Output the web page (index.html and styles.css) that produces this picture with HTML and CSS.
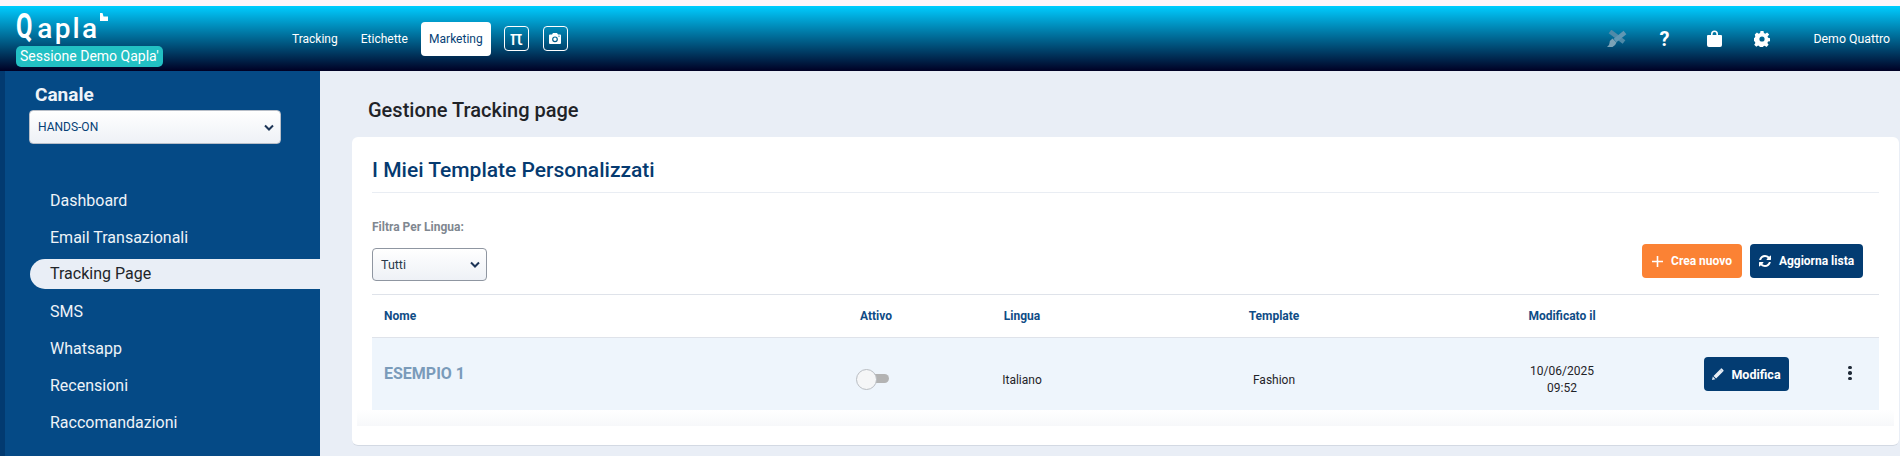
FILE: index.html
```html
<!DOCTYPE html>
<html lang="it">
<head>
<meta charset="utf-8">
<title>Gestione Tracking page</title>
<link rel="stylesheet" href="styles.css">
</head>
<body>
<div class="strip"></div>
<header class="topbar">
  <div class="brand">
    <div class="logo"><span class="logo-text"><span class="logo-q">Q</span>apla</span><svg class="logo-mark" viewBox="0 0 8 8"><path d="M0 0h2.5l1 3.5H8V8H0z" fill="#fff"/></svg></div>
    <div class="badge">Sessione Demo Qapla'</div>
  </div>
  <nav class="nav">
    <a class="nav-link">Tracking</a>
    <a class="nav-link">Etichette</a>
    <a class="nav-link nav-active">Marketing</a>
    <a class="nav-icon pi">π</a>
    <a class="nav-icon"><svg width="12" height="11" viewBox="0 0 12 11"><path d="M0 2.5Q0 1.6 1 1.6h2L4 0h4l1 1.6h2q1 0 1 .9V10q0 1-1 1H1q-1 0-1-1zM6 3.4a2.9 2.9 0 1 0 0 5.8 2.9 2.9 0 0 0 0-5.8zm0 1.2a1.7 1.7 0 1 1 0 3.4 1.7 1.7 0 0 1 0-3.4zM10 2.6a.6.6 0 1 0 0 1.2.6.6 0 0 0 0-1.2z" fill="#fff" fill-rule="evenodd"/></svg></a>
  </nav>
  <div class="tools">
    <svg class="tool-brush" width="20" height="17" viewBox="0 0 20 17"><path d="M3 1.500 17 12" stroke="#4f8aa8" stroke-width="4.500" fill="none"/><path d="M18 2.500 8 10.500" stroke="#5f97b3" stroke-width="4.500" fill="none"/><path d="M5.500 8.500l4 4q-1 3-4 4.500H0q2.500-1.500 2.500-4t3-4.500z" fill="#7ba2b6"/></svg>
    <span class="tool-q">?</span>
    <svg class="tool-bag" width="15" height="17" viewBox="0 0 15 17"><path d="M4 5V4a3.5 3.5 0 0 1 7 0v1h3q1 0 1 1v9q0 2-2 2H2q-2 0-2-2V6q0-1 1-1zm1.600 0h3.800V4a1.900 1.900 0 0 0-3.800 0z" fill="#fff" fill-rule="evenodd"/></svg>
    <svg class="tool-gear" width="16" height="16" viewBox="0 0 16 16"><path d="M6.500 0h3l.4 2.100 1.400.6 1.800-1.200 2.100 2.100L13.500 5.400l.6 1.400 1.900.4v3l-2 .4-.6 1.400 1.200 1.800-2.100 2.100-1.800-1.200-1.400.6-.4 1.900h-3l-.4-2-1.400-.6-1.800 1.200-2.100-2.100 1.200-1.800-.6-1.400-2-.4V7.200l1.900-.4.600-1.400L.8 3.600l2.100-2.100 1.800 1.200 1.400-.6zM8 5.400a2.600 2.600 0 1 0 0 5.200 2.600 2.600 0 0 0 0-5.200z" fill="#fff" fill-rule="evenodd"/></svg>
    <span class="user">Demo Quattro</span>
  </div>
</header>
<div class="layout">
  <aside class="sidebar">
    <div class="channel-title">Canale</div>
    <div class="select channel-select"><span>HANDS-ON</span><svg class="chev" width="10" height="7" viewBox="0 0 10 7"><path d="M1 1.500l4 4 4-4" fill="none" stroke="#1d3557" stroke-width="2"/></svg></div>
    <ul class="menu">
      <li class="menu-item">Dashboard</li>
      <li class="menu-item">Email Transazionali</li>
      <li class="menu-item menu-active">Tracking Page</li>
      <li class="menu-item">SMS</li>
      <li class="menu-item">Whatsapp</li>
      <li class="menu-item">Recensioni</li>
      <li class="menu-item">Raccomandazioni</li>
    </ul>
  </aside>
  <main class="main">
    <h1 class="page-title">Gestione Tracking page</h1>
    <section class="card">
      <h2 class="card-title">I Miei Template Personalizzati</h2>
      <div class="toolbar">
        <div class="filter">
          <div class="filter-label">Filtra Per Lingua:</div>
          <div class="select lang-select"><span>Tutti</span><svg class="chev" width="10" height="7" viewBox="0 0 10 7"><path d="M1 1.500l4 4 4-4" fill="none" stroke="#1d3557" stroke-width="2"/></svg></div>
        </div>
        <div class="actions">
          <button class="btn btn-orange"><svg width="11" height="11" viewBox="0 0 11 11"><path d="M5.500 0v11M0 5.500h11" stroke="#fff" stroke-width="1.600"/></svg>Crea nuovo</button>
          <button class="btn btn-navy btn-refresh"><svg width="12" height="12" viewBox="0 0 1536 1536"><path d="M1511 928q0 5-1 7-64 268-268 434.500T764 1536q-146 0-282.500-55T238 1324l-129 129q-19 19-45 19t-45-19-19-45V960q0-26 19-45t45-19h448q26 0 45 19t19 45-19 45l-137 137q71 66 161 102t187 36q134 0 250-65t186-179q11-17 53-117 8-23 30-23h192q13 0 22.500 9.500t9.500 22.500zM1536 128v448q0 26-19 45t-45 19h-448q-26 0-45-19t-19-45 19-45l138-138q-148-137-349-137-134 0-250 65T332 500q-11 17-53 117-8 23-30 23H50q-13 0-22.500-9.500T18 608v-7q65-268 270-434.500T768 0q146 0 284 55.500T1297 212l130-129q19-19 45-19t45 19 19 45z" fill="#fff"/></svg>Aggiorna lista</button>
        </div>
      </div>
      <div class="table">
        <div class="row head">
          <div class="cell name">Nome</div>
          <div class="cell">Attivo</div>
          <div class="cell">Lingua</div>
          <div class="cell">Template</div>
          <div class="cell">Modificato il</div>
          <div class="cell"></div>
          <div class="cell"></div>
        </div>
        <div class="row body">
          <div class="cell name esempio">ESEMPIO 1</div>
          <div class="cell"><span class="switch"></span></div>
          <div class="cell low">Italiano</div>
          <div class="cell low">Fashion</div>
          <div class="cell date">10/06/2025<br>09:52</div>
          <div class="cell edit"><button class="btn btn-navy btn-edit"><svg width="12" height="12" viewBox="0 0 12 12"><path d="M0 12l.8-3.400L3.400 11.200zM1.500 7.900L8 1.400l2.600 2.600L4.100 10.500zM8.700.7q.7-.7 1.400 0l1.200 1.200q.7.7 0 1.400l-.6.6-2.600-2.600z" fill="#e8eef5"/></svg>Modifica</button></div>
          <div class="cell dots"><i></i><i></i><i></i></div>
        </div>
      </div>
      <div class="card-fade"></div>
    </section>
  </main>
</div>
</body>
</html>
```
FILE: styles.css
```css
* { box-sizing: border-box; }
html, body { margin: 0; padding: 0; height: 456px; overflow: hidden; }
body { font-family: Roboto, "Liberation Sans", sans-serif; background: #e9eef6; color: #212529; }

.strip { height: 6px; background: #fff5fa; }

.topbar {
  height: 65px;
  display: flex;
  align-items: stretch;
  background: linear-gradient(180deg, #00ccff 0%, #000024 100%);
  color: #fff;
}
.brand { width: 292px; padding: 7px 0 0 16px; flex: none; }
.logo { display: flex; align-items: flex-start; height: 33px; }
.logo-text {
  font-family: Roboto, sans-serif;
  font-weight: 500;
  font-size: 28px;
  line-height: 30px;
  letter-spacing: 2.2px;
  color: #fff;
  white-space: nowrap;
}
.logo-q {
  display: inline-block;
  font-size: 35px;
  font-weight: 700;
  line-height: 28px;
  transform: scaleX(0.68);
  transform-origin: left center;
  margin-right: -5px;
}
.logo-mark { width: 8px; height: 8px; flex: none; margin-left: 1px; }
.badge {
  width: 147px;
  height: 21px;
  background: #22c0c4;
  border-radius: 5px;
  font-size: 14px;
  line-height: 21px;
  padding-left: 4px;
  white-space: nowrap;
  color: #fff;
}

.nav { display: flex; align-items: center; font-size: 12px; }
.nav-link { margin-right: 23px; white-space: nowrap; }
.nav-active {
  margin: 0 13px 0 -10px;
  width: 70px;
  height: 34px;
  background: #fff;
  border-radius: 4px;
  color: #063f76;
  line-height: 34px;
  text-align: center;
}
.nav-icon {
  width: 25px;
  height: 25px;
  margin-right: 14px;
  border: 1px solid #fff;
  border-radius: 4px;
  display: flex;
  align-items: center;
  justify-content: center;
  font-size: 18px;
  line-height: 1;
}
.pi { font-size: 21px; }

.tools { margin-left: auto; display: flex; align-items: center; padding: 0 10px 0 0; }
.tool-brush { margin-right: 32px; }
.tool-q { font-size: 20px; font-weight: 700; width: 12px; margin-right: 36px; text-align: center; }
.tool-bag { margin-right: 32px; }
.tool-gear { margin-right: 44px; }
.user { font-size: 12.3px; white-space: nowrap; }

.layout { display: flex; height: 385px; }
.sidebar {
  width: 320px;
  flex: none;
  background: #054a86;
  border-left: 5px solid #023a70;
  color: #eef3f8;
  padding-top: 13px;
}
.channel-title { font-size: 19px; font-weight: 700; line-height: 22px; padding-left: 30px; }
.channel-select { margin: 4px 0 0 24px; width: 252px; height: 34px; font-size: 12px; }
.select {
  display: flex;
  align-items: center;
  justify-content: space-between;
  padding: 0 6px 0 8px;
  background: linear-gradient(180deg, #fff 0%, #eef1f6 100%);
  border: 1px solid #b8bec8;
  border-radius: 4px;
  color: #063f76;
}
.chev { flex: none; }
.menu { list-style: none; margin: 38px 0 0; padding: 0; font-size: 16px; }
.menu-item { height: 37px; line-height: 37px; padding-left: 45px; }
.menu-active {
  margin: 3px 0 4px 25px;
  height: 30px;
  line-height: 30px;
  padding-left: 20px;
  background: #e9eef6;
  border-radius: 15px 0 0 15px;
  color: #212529;
}

.main { flex: 1; min-width: 0; padding: 0 1px 0 32px; }
.page-title {
  margin: 0;
  height: 66px;
  padding: 27px 0 0 16px;
  font-size: 20px;
  font-weight: 500;
  line-height: 24px;
  color: #1f2328;
}
.card {
  height: 309px;
  background: #fff;
  border-radius: 6px;
  border-bottom: 1px solid #d3d9e3;
  padding: 0 20px;
  position: relative;
}
.card-title {
  margin: 0;
  height: 56px;
  padding-top: 21px;
  font-size: 21px;
  font-weight: 500;
  line-height: 25px;
  color: #053a70;
  border-bottom: 1px solid #e9edf3;
}
.toolbar { display: flex; justify-content: space-between; align-items: flex-end; height: 101px; }
.filter { padding-bottom: 13px; }
.filter-label { font-size: 12px; font-weight: 700; line-height: 14px; color: #7f8790; margin-bottom: 14px; }
.lang-select { width: 115px; height: 33px; font-size: 12.5px; color: #2b3a4a; border-color: #8f96a1; }
.actions { display: flex; gap: 8px; padding: 0 16px 16px 0; }
.btn {
  height: 34px;
  border: 0;
  border-radius: 4px;
  padding: 0;
  display: flex;
  align-items: center;
  justify-content: center;
  gap: 8px;
  font-family: inherit;
  font-size: 12px;
  font-weight: 700;
  color: #fff;
}
.btn-orange { width: 100px; background: #fb8234; }
.btn-navy { background: #033c72; }
.btn-refresh { width: 113px; }
.btn-edit { width: 85px; font-size: 12.5px; gap: 7px; }

.row {
  display: grid;
  grid-template-columns: 396px 216px 76px 428px 148px 185px 58px;
  align-items: center;
  text-align: center;
}
.head {
  height: 44px;
  border-top: 1px solid #dfe3ea;
  border-bottom: 1px solid #dfe3ea;
  font-size: 12px;
  font-weight: 700;
  color: #0f4c86;
}
.body { height: 72px; background: #eef5fc; font-size: 12px; color: #1f2328; }
.cell { white-space: nowrap; }
.name { text-align: left; padding-left: 12px; }
.esempio { font-size: 16px; font-weight: 700; color: #7a9bba; padding-bottom: 2px; }
.low { padding-top: 12px; }
.date { line-height: 17px; padding-top: 12px; }
.edit { display: flex; padding-left: 68px; }
.switch {
  display: block;
  margin: 8px 0 0 88px;
  width: 33px;
  height: 19px;
  position: relative;
}
.switch::before {
  content: "";
  position: absolute;
  left: 12px;
  top: 5px;
  width: 21px;
  height: 9px;
  border-radius: 5px;
  background: #b3b3b3;
}
.switch::after {
  content: "";
  position: absolute;
  left: 0;
  top: 0;
  width: 19px;
  height: 19px;
  border-radius: 50%;
  background: #f5f6f7;
  border: 1px solid #b9bdc2;
}
.dots { display: flex; flex-direction: column; align-items: center; gap: 2px; padding-bottom: 2px; }
.dots i { width: 3.5px; height: 3.5px; border-radius: 50%; background: #1f2a37; }
.card-fade {
  position: absolute;
  left: 5px;
  right: 5px;
  top: 273px;
  height: 16px;
  background: linear-gradient(180deg, #fff 0%, #f7f8fa 100%);
}
```
